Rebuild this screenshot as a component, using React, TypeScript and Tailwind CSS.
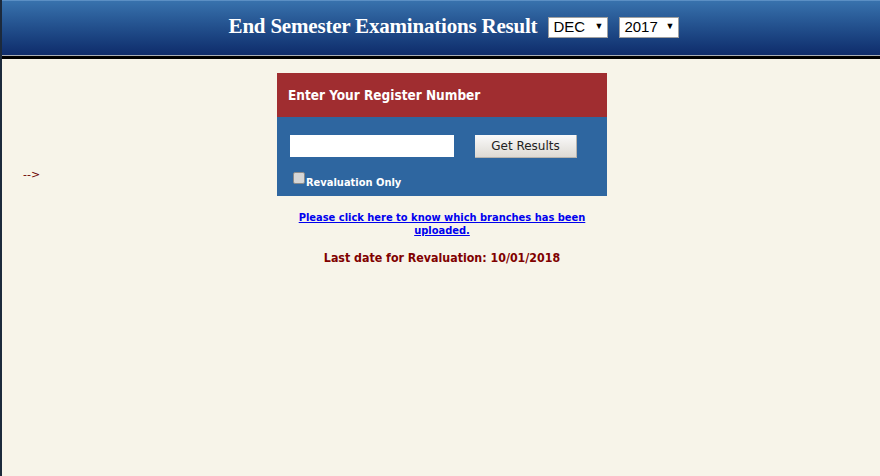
export default function App() {
  return (
    <div className="min-h-[476px] bg-[#f7f4e9] border-l-2 border-[#1c2a3c] font-['DejaVu_Sans_Condensed','DejaVu_Sans',sans-serif]">
      {/* Header */}
      <div className="h-[55px] border-t border-[#5b8fc4] bg-gradient-to-b from-[#3872ad] to-[#0f2c6b] flex items-center justify-center gap-[11px] pl-[26px] pb-[2px]">
        <h1 className="font-['Liberation_Serif',serif] font-bold text-[21px] text-white tracking-[-0.2px]">
          End Semester Examinations Result
        </h1>
        <div className="flex gap-[11px]">
          <div className="h-[21px] w-[60px] bg-white border border-[#a0a0a0] flex items-center justify-between px-[4px] font-['Liberation_Sans',sans-serif] text-[15px] text-black">
            <span>DEC</span>
            <span className="text-[9px]">▼</span>
          </div>
          <div className="h-[21px] w-[60px] bg-white border border-[#a0a0a0] flex items-center justify-between px-[4px] font-['Liberation_Sans',sans-serif] text-[15px] text-black">
            <span>2017</span>
            <span className="text-[9px]">▼</span>
          </div>
        </div>
      </div>
      <div className="h-px bg-[#a7acb3]" />
      <div className="h-[3px] bg-black" />

      {/* Body */}
      <div className="flex">
        <div className="w-[275px] pl-[21px] pt-[108px] text-[11px] text-[#6b0000] font-['DejaVu_Sans',sans-serif]">--&gt;</div>
        <div className="w-[330px] pt-[14px] flex flex-col items-center">
          <div className="w-[330px]">
            <div className="h-[44px] bg-[#a02d30] flex items-center pl-[11px] text-white font-bold text-[13.5px]">
              Enter Your Register Number
            </div>
            <div className="h-[79px] bg-[#2e66a0] pt-[18px] pl-[13px]">
              <div className="flex items-start gap-[21px]">
                <div className="w-[164px] h-[22px] bg-white" />
                <button className="w-[102px] h-[23px] bg-gradient-to-b from-[#fafafa] to-[#dedad4] font-['DejaVu_Sans',sans-serif] text-[12px] text-[#222] border-r border-b border-[#b8b4ae]">
                  Get Results
                </button>
              </div>
              <div className="flex items-end mt-[14px] pl-[3px]">
                <span className="w-[12px] h-[12px] bg-[#d6d6d6] border border-[#8a8a8a] rounded-[2px] mb-[4px]" />
                <span className="text-white font-bold text-[11px] leading-[13px] ml-[1px] mb-[-1px]">Revaluation Only</span>
              </div>
            </div>
          </div>
          <a href="#" className="mt-[15px] text-center text-[#0000ee] underline font-bold text-[11px] leading-[13px] w-[300px]">
            Please click here to know which branches has been uploaded.
          </a>
          <div className="mt-[12px] text-[#800000] font-bold text-[12.3px]">
            Last date for Revaluation: 10/01/2018
          </div>
        </div>
      </div>
    </div>
  )
}
